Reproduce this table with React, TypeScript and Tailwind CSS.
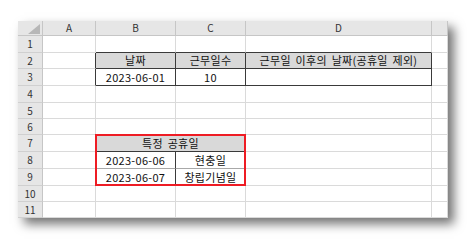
const FONT = "[font-family:'Noto_Sans_CJK_KR','Noto_Sans',sans-serif]";

const LIGHT_R = "border-r-[#dadada]";
const LIGHT_B = "border-b-[#dadada]";
const DARK_R = "border-r-[#3a3a3a]";
const DARK_B = "border-b-[#3a3a3a]";
const MID_B = "border-b-[#a8a8a8]";

const columns = [
  { name: "A", width: "w-[53px]" },
  { name: "B", width: "w-[80px]" },
  { name: "C", width: "w-[70px]" },
  { name: "D", width: "w-[186px]" },
  { name: "", width: "w-[16px]" },
];

const rowHeights = [
  "h-[17px]",
  "h-[16px]",
  "h-[17px]",
  "h-[17px]",
  "h-[16px]",
  "h-[16px]",
  "h-[17px]",
  "h-[17px]",
  "h-[17px]",
  "h-[16px]",
  "h-[16px]",
];

type Cell = { text?: string; right?: string; bottom?: string; fill?: string };

const HEAD = "bg-[#d9d9d9]";

// per-row cell overrides, keyed by column index (0 = A)
const sheet: Record<number, Record<number, Cell>> = {
  1: {
    1: { bottom: DARK_B },
    2: { bottom: DARK_B },
    3: { bottom: DARK_B },
  },
  2: {
    0: { right: DARK_R },
    1: { text: "날짜", right: DARK_R, bottom: DARK_B, fill: HEAD },
    2: { text: "근무일수", right: DARK_R, bottom: DARK_B, fill: HEAD },
    3: { text: "근무일 이후의 날짜(공휴일 제외)", right: DARK_R, bottom: DARK_B, fill: HEAD },
  },
  3: {
    0: { right: DARK_R },
    1: { text: "2023-06-01", right: DARK_R, bottom: DARK_B },
    2: { text: "10", right: DARK_R, bottom: DARK_B },
    3: { right: DARK_R, bottom: DARK_B },
  },
  8: {
    1: { text: "2023-06-06", right: DARK_R, bottom: MID_B },
    2: { text: "현충일", bottom: MID_B },
  },
  9: {
    1: { text: "2023-06-07", right: DARK_R },
    2: { text: "창립기념일" },
  },
};

function BodyCell({ cell, width }: { cell?: Cell; width: string }) {
  return (
    <div
      className={`flex items-center justify-center border-r border-b ${cell?.right ?? LIGHT_R} ${cell?.bottom ?? LIGHT_B} ${cell?.fill ?? ""} ${width} text-[11px] leading-none tracking-[0.3px] text-[#111] whitespace-nowrap [word-spacing:2px]`}
    >
      {cell?.text}
    </div>
  );
}

function SheetRow({ row, height }: { row: number; height: string }) {
  const cells = sheet[row] ?? {};

  return (
    <div className={`flex ${height}`}>
      <div className="flex w-[25px] items-center justify-center border-r border-b border-r-[#c6c6c6] border-b-[#d0d0d0] bg-[#e6e6e6] text-[10px] leading-none text-[#333]">
        {row}
      </div>
      {row === 7 ? (
        <>
          <BodyCell width={columns[0].width} />
          <div
            className={`flex w-[150px] items-center justify-center border-r border-b ${LIGHT_R} ${DARK_B} ${HEAD} text-[11px] leading-none tracking-[0.3px] text-[#111] [word-spacing:2px]`}
          >
            특정 공휴일
          </div>
          <BodyCell width={columns[3].width} />
          <BodyCell width={columns[4].width} />
        </>
      ) : (
        columns.map((col, i) => <BodyCell key={col.name + i} cell={cells[i]} width={col.width} />)
      )}
    </div>
  );
}

export default function App() {
  return (
    <div className={`h-[247px] w-[467px] bg-white pl-[18px] pt-[21px] ${FONT}`}>
      <div className="relative w-[430px] bg-white shadow-[6px_6px_10px_rgba(0,0,0,0.55)]">
        {/* column letters */}
        <div className="flex h-[15px]">
          <div className="relative w-[25px] border-r border-b border-r-[#c6c6c6] border-b-[#c6c6c6] bg-[#e6e6e6]">
            <svg className="absolute right-[2px] bottom-[1px]" width="12" height="10" viewBox="0 0 12 10">
              <polygon points="12,0 12,10 0,10" fill="#b7b7b7" />
            </svg>
          </div>
          {columns.map((col, i) => (
            <div
              key={col.name + i}
              className={`flex items-center justify-center border-r border-b border-r-[#c6c6c6] border-b-[#c6c6c6] bg-[#e6e6e6] ${col.width} text-[10px] leading-none text-[#333]`}
            >
              {col.name}
            </div>
          ))}
        </div>

        {rowHeights.map((h, i) => (
          <SheetRow key={i} row={i + 1} height={h} />
        ))}

        {/* red highlight around the holiday list */}
        <div className="pointer-events-none absolute top-[113px] left-[77px] h-[52px] w-[151px] border-2 border-[#ee1c24]" />
      </div>
    </div>
  );
}
